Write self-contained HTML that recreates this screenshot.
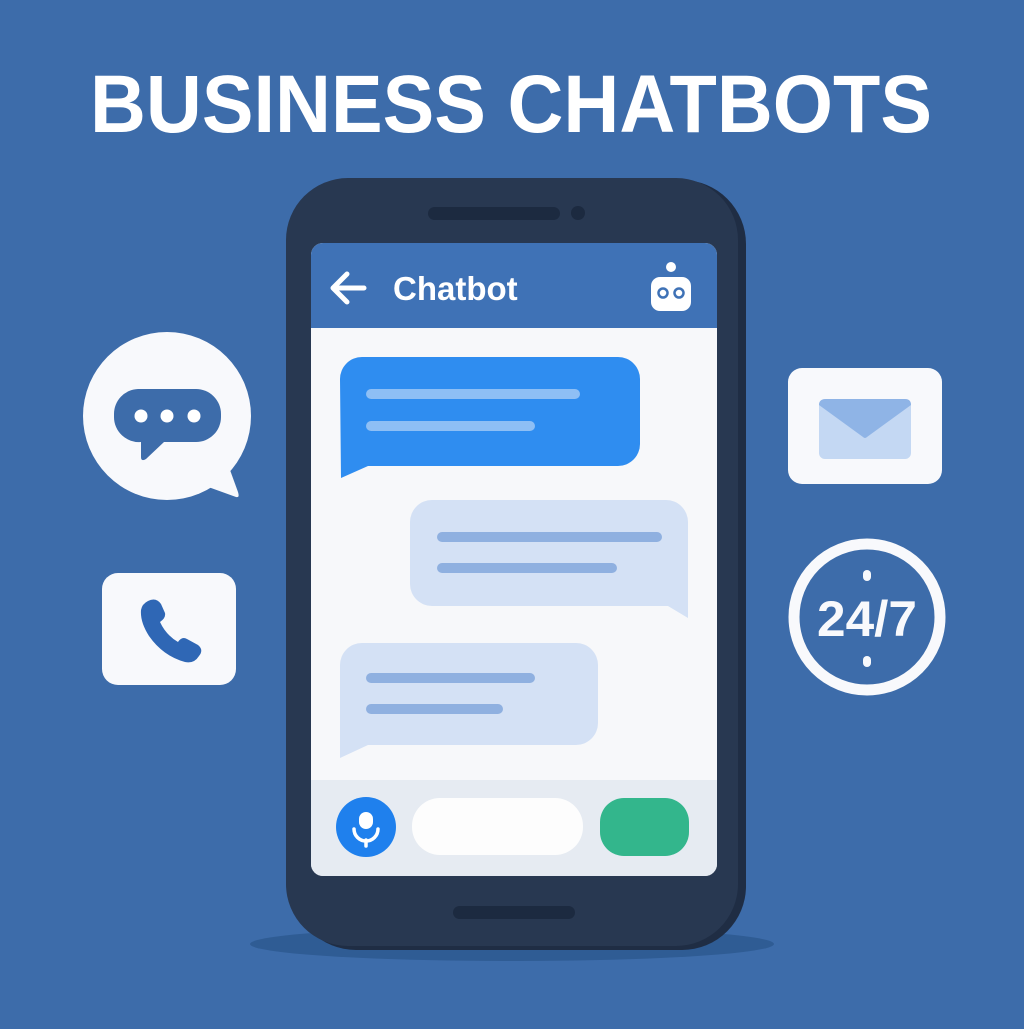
<!DOCTYPE html>
<html><head><style>
html,body{margin:0;padding:0;}
body{width:1024px;height:1024px;background:#3d6caa;overflow:hidden;}
</style></head><body>
<svg width="1024" height="1024" viewBox="0 0 1024 1024" xmlns="http://www.w3.org/2000/svg">
<rect width="1024" height="1024" fill="#3d6caa"/>
<text x="511" y="132" text-anchor="middle" font-family="Liberation Sans, sans-serif" font-weight="bold" font-size="82" fill="#fff" textLength="842" lengthAdjust="spacingAndGlyphs">BUSINESS CHATBOTS</text>

<ellipse cx="512" cy="944" rx="262" ry="17" fill="#2f5c94"/>
<rect x="292" y="180" width="454" height="770" rx="64" fill="#1f2d44"/>
<rect x="286" y="178" width="452" height="768" rx="62" fill="#283851"/>
<rect x="428" y="207" width="132" height="13" rx="6.5" fill="#1c2a40"/>
<circle cx="578" cy="213" r="7" fill="#1c2a40"/>
<rect x="453" y="906" width="122" height="13" rx="6.5" fill="#1c2a40"/>
<clipPath id="sc"><rect x="311" y="243" width="406" height="633" rx="12"/></clipPath>
<g clip-path="url(#sc)">
<rect x="311" y="243" width="406" height="633" fill="#f7f8fa"/>
<rect x="311" y="243" width="406" height="85" fill="#3f72b6"/>
<rect x="311" y="780" width="406" height="96" fill="#e6ebf2"/>
</g>
<path d="M364 288 H334 M347 274 L333 288 L347 302" stroke="#fff" stroke-width="5" fill="none" stroke-linecap="round" stroke-linejoin="round"/>
<text x="393" y="300" font-family="Liberation Sans, sans-serif" font-size="33" font-weight="bold" fill="#fff">Chatbot</text>
<circle cx="671" cy="267" r="5" fill="#fff"/>
<rect x="651" y="277" width="40" height="34" rx="9" fill="#fff"/>
<circle cx="663" cy="293" r="4.5" fill="none" stroke="#3f72b6" stroke-width="2.5"/>
<circle cx="679" cy="293" r="4.5" fill="none" stroke="#3f72b6" stroke-width="2.5"/>
<path d="M362 357 H618 A22 22 0 0 1 640 379 V444 A22 22 0 0 1 618 466 H368 L341 478 L340 379 A22 22 0 0 1 362 357 Z" fill="#2f8df0"/>
<rect x="366" y="389" width="214" height="10" rx="5" fill="#8ebff5"/>
<rect x="366" y="421" width="169" height="10" rx="5" fill="#8ebff5"/>
<path d="M432 500 H666 A22 22 0 0 1 688 522 V618 L668 606 H432 A22 22 0 0 1 410 584 V522 A22 22 0 0 1 432 500 Z" fill="#d4e1f5"/>
<rect x="437" y="532" width="225" height="10" rx="5" fill="#8fb0e0"/>
<rect x="437" y="563" width="180" height="10" rx="5" fill="#8fb0e0"/>
<path d="M362 643 H576 A22 22 0 0 1 598 665 V723 A22 22 0 0 1 576 745 H368 L340 758 V665 A22 22 0 0 1 362 643 Z" fill="#d4e1f5"/>
<rect x="366" y="673" width="169" height="10" rx="5" fill="#8fb0e0"/>
<rect x="366" y="704" width="137" height="10" rx="5" fill="#8fb0e0"/>
<circle cx="366" cy="827" r="30" fill="#1f80ed"/>
<rect x="359" y="812" width="14" height="17" rx="7" fill="#fff"/>
<path d="M354 829 A12 12 0 0 0 378 829" stroke="#fff" stroke-width="3.5" fill="none" stroke-linecap="round"/>
<line x1="366" y1="840" x2="366" y2="846" stroke="#fff" stroke-width="3.5" stroke-linecap="round"/>
<rect x="412" y="798" width="171" height="57" rx="28" fill="#fdfdfd"/>
<rect x="600" y="798" width="89" height="58" rx="24" fill="#33b68c"/>

<!-- left chat icon -->
<circle cx="167" cy="416" r="84" fill="#f8f9fc"/>
<path d="M200 484 L236 497 Q240 498 238 492 L230 470 Z" fill="#f8f9fc"/>
<path d="M138 389 H196 A25 25 0 0 1 221 414 V417 A25 25 0 0 1 196 442 H164 L146 459 Q141 462 141 457 V442 A25 25 0 0 1 114 417 V414 A25 25 0 0 1 138 389 Z" fill="#3d6caa"/>
<circle cx="141" cy="416" r="6.5" fill="#fff"/>
<circle cx="167" cy="416" r="6.5" fill="#fff"/>
<circle cx="194" cy="416" r="6.5" fill="#fff"/>
<rect x="102" y="573" width="134" height="112" rx="16" fill="#f8f9fc"/>
<path d="M148 601 Q156 597 161 604 L165 613 Q166 618 160 622 Q166 635 178 642 Q182 636 187 639 L198 645 Q204 650 199 656 Q194 664 185 662 Q163 656 149 636 Q140 622 141 610 Q142 604 148 601 Z" fill="#2f67b5"/>

<rect x="788" y="368" width="154" height="116" rx="14" fill="#f8f9fc"/>
<rect x="819" y="399" width="92" height="60" rx="6" fill="#c4d8f3"/>
<path d="M819 405 Q819 399 826 399 H905 Q911 399 911 405 L867 437 Q865 439 863 437 Z" fill="#8fb4e6"/>

<circle cx="867" cy="617" r="73" fill="none" stroke="#f8f9fc" stroke-width="11"/>
<rect x="863" y="570" width="8" height="11" rx="4" fill="#f8f9fc"/>
<rect x="863" y="656" width="8" height="11" rx="4" fill="#f8f9fc"/>
<text x="867" y="636" text-anchor="middle" font-family="Liberation Sans, sans-serif" font-weight="bold" font-size="50" fill="#f8f9fc" textLength="100" lengthAdjust="spacingAndGlyphs">24/7</text>
</svg>
</body></html>
